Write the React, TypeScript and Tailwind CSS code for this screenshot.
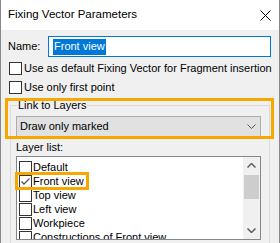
import React from 'react';

const layers = ['Default', 'Front view', 'Top view', 'Left view', 'Workpiece', 'Constructions of Front view'];

const Check = ({ checked = false }: { checked?: boolean }) => (
  <span className="w-[13px] h-[13px] shrink-0 border border-[#333] bg-white flex items-center justify-center">
    {checked && (
      <svg width="11" height="11" viewBox="0 0 11 11">
        <path d="M1.5 5.5 L4 8 L9.5 2.5" fill="none" stroke="#555" strokeWidth="1.3" />
      </svg>
    )}
  </span>
);

export default function App() {
  return (
    <div className="relative w-[280px] h-[243px] overflow-hidden bg-[#f0f0f0] border-x border-[#888] text-[11px] text-black font-['Liberation_Sans',Arial,sans-serif] leading-none">
      {/* title bar */}
      <div className="h-[30px] bg-white flex items-center justify-between pl-[7px] pr-[8px]">
        <span className="text-[11.5px]">Fixing Vector Parameters</span>
        <svg width="11" height="11" viewBox="0 0 11 11">
          <path d="M0.5 0.5 L10.5 10.5 M10.5 0.5 L0.5 10.5" stroke="#000" strokeWidth="1" />
        </svg>
      </div>

      <div className="pl-[7px]">
        {/* name */}
        <div className="mt-[6px] flex items-center h-[21px]">
          <span className="w-[40px]">Name:</span>
          <div className="w-[223px] h-[21px] border border-[#0078d7] bg-white flex items-center pl-[4px]">
            <span className="bg-[#0078d7] text-white h-[16px] flex items-center px-[1px]">Front view</span>
          </div>
        </div>

        {/* options */}
        <div className="mt-[5px] flex items-center gap-[2px] h-[13px] pl-[1px] whitespace-nowrap">
          <Check />
          <span>Use as default Fixing Vector for Fragment insertion</span>
        </div>
        <div className="mt-[6px] flex items-center gap-[2px] h-[13px] pl-[1px] whitespace-nowrap">
          <Check />
          <span>Use only first point</span>
        </div>

        {/* group */}
        <div className="mt-[11px] ml-[2px] w-[260px] h-[200px] border border-[#dcdcdc] pl-[5px]">
          <div className="-mt-[7px] ml-[1px] w-fit bg-[#f0f0f0] px-[1px] h-[13px] flex items-center">Link to Layers</div>
          <div className="mt-[4px] w-[245px] h-[21px] bg-[#e1e1e1] border border-[#adadad] flex items-center justify-between pl-[3px] pr-[4px]">
            <span>Draw only marked</span>
            <svg width="9" height="5" viewBox="0 0 9 5">
              <path d="M0.5 0.5 L4.5 4.5 L8.5 0.5" fill="none" stroke="#555" strokeWidth="1" />
            </svg>
          </div>
          <div className="mt-[4px] h-[13px] flex items-center">Layer list:</div>
          <div className="mt-[2px] w-[245px] h-[84px] border border-[#828790] bg-white flex">
            <div className="flex-1 overflow-hidden pt-[3px] pl-[2px]">
              {layers.map((l, i) => (
                <div key={l} className="h-[14px] flex items-center gap-[1px] whitespace-nowrap">
                  <Check checked={i === 1} />
                  <span>{l}</span>
                </div>
              ))}
            </div>
            <div className="w-[17px] bg-[#f0f0f0] flex flex-col">
              <div className="h-[17px] flex items-center justify-center">
                <svg width="9" height="5" viewBox="0 0 9 5">
                  <path d="M0.5 4.5 L4.5 0.5 L8.5 4.5" fill="none" stroke="#606060" strokeWidth="1.5" />
                </svg>
              </div>
              <div className="flex-1">
                <div className="mt-[1px] mx-[1px] h-[24px] bg-[#cdcdcd]" />
              </div>
              <div className="h-[17px] flex items-center justify-center">
                <svg width="9" height="5" viewBox="0 0 9 5">
                  <path d="M0.5 0.5 L4.5 4.5 L8.5 0.5" fill="none" stroke="#606060" strokeWidth="1.5" />
                </svg>
              </div>
            </div>
          </div>
        </div>
      </div>

      {/* highlight overlays */}
      <div className="absolute left-[4px] top-[98px] w-[269px] h-[41px] border-[3px] border-[#f6a800]" />
      <div className="absolute left-[14px] top-[172px] w-[74px] h-[18px] border-[3px] border-[#f6a800]" />
    </div>
  );
}
